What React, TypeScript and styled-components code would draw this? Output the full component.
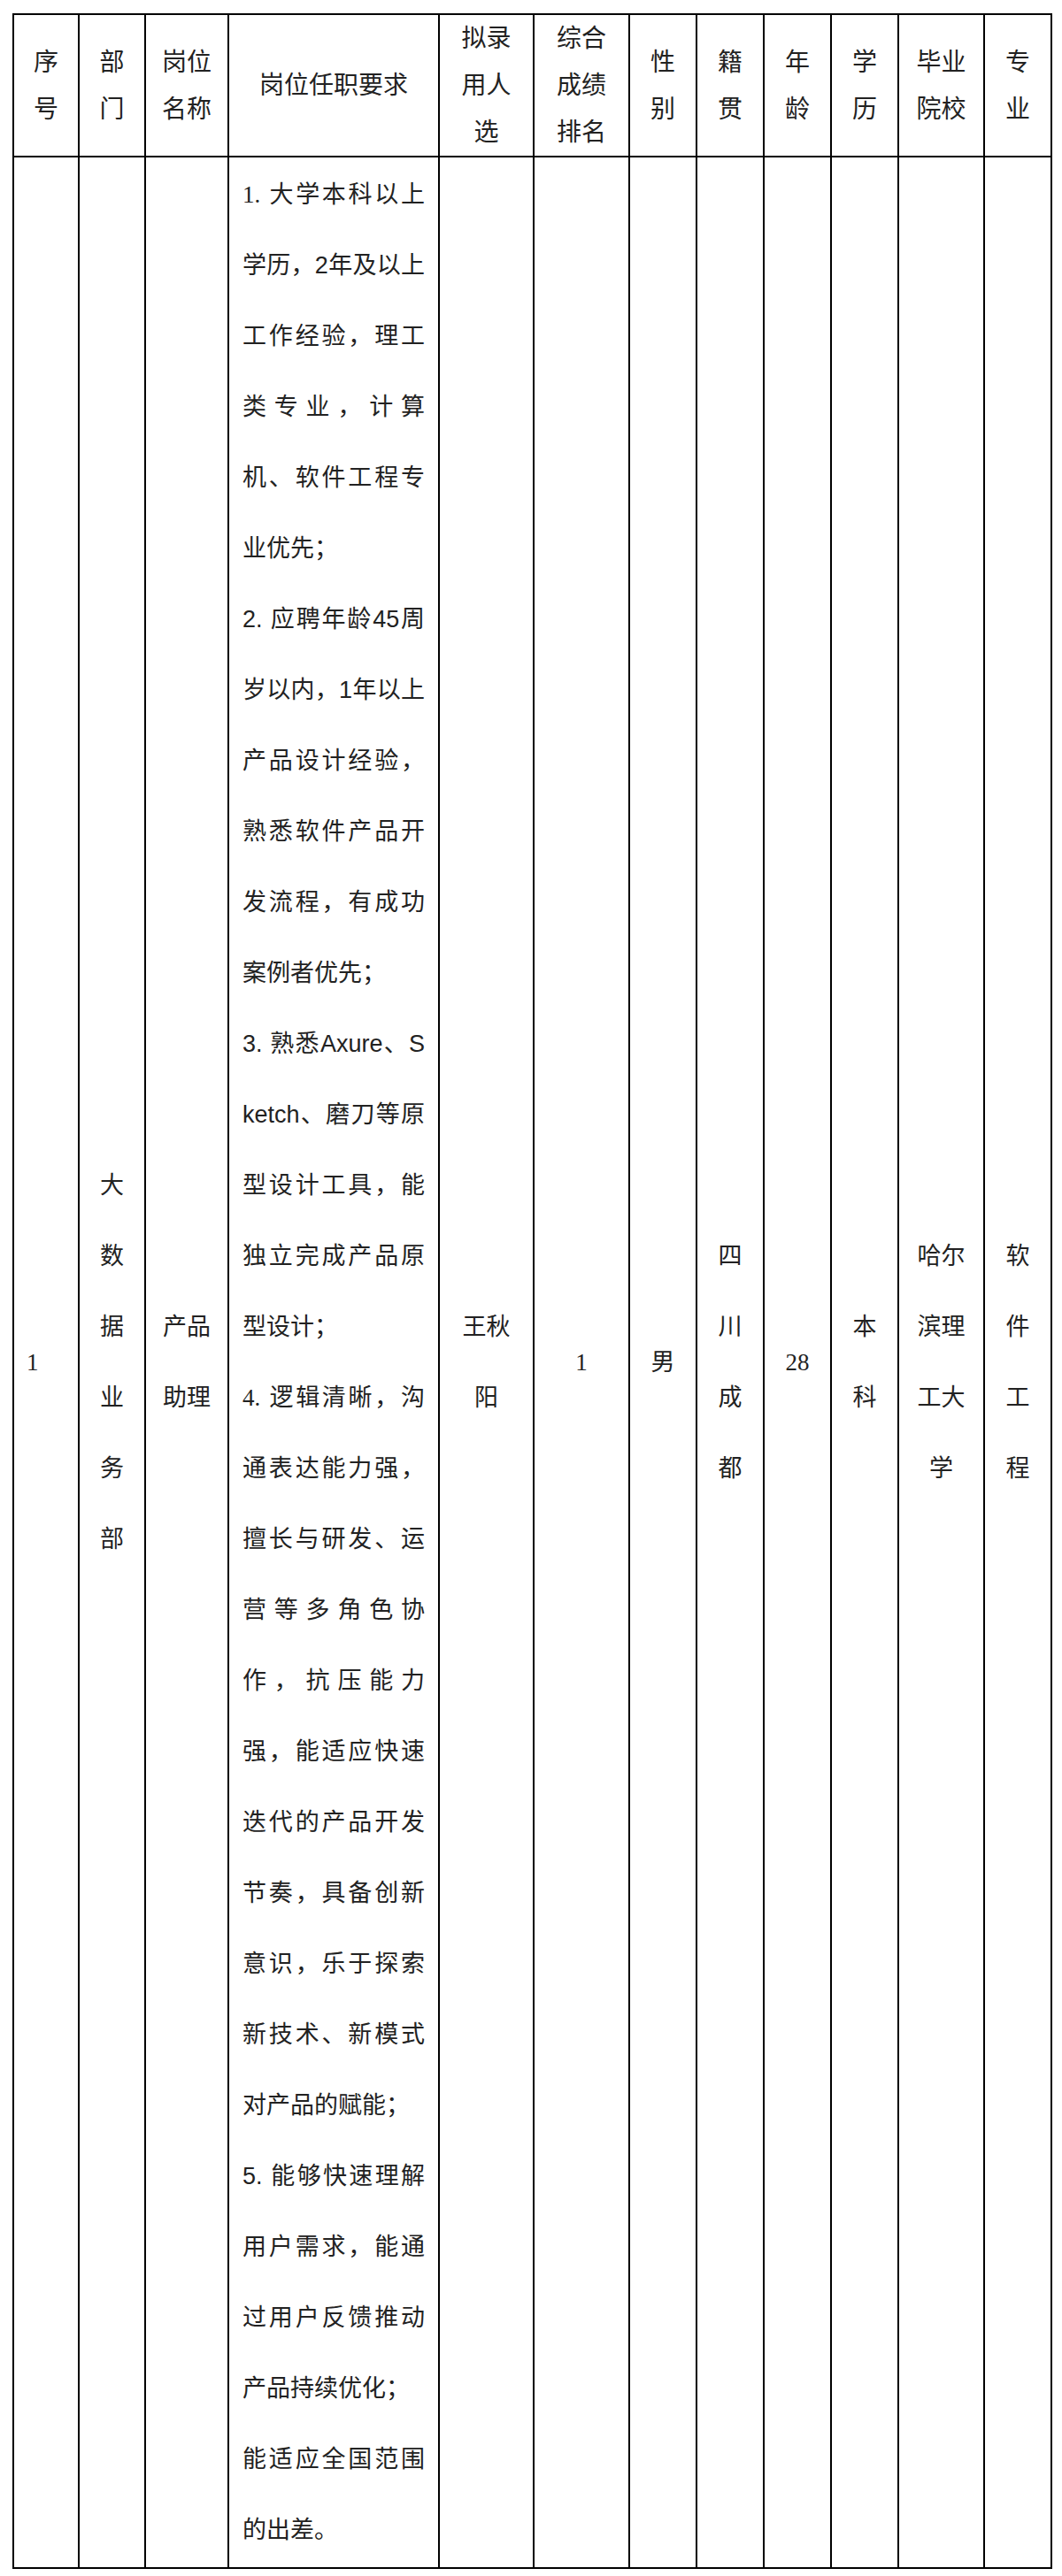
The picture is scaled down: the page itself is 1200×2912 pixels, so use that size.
import React from "react";
import styled, { createGlobalStyle } from "styled-components";

const GlobalStyle = createGlobalStyle`
  html, body {
    margin: 0;
    padding: 0;
    background: #ffffff;
  }
  body {
    font-family: "Liberation Serif", "Noto Sans CJK SC", serif;
    color: #222222;
  }
`;

const Page = styled.div`
  padding: 15px 0 0 14px;
`;

const Table = styled.table`
  border-collapse: collapse;
  table-layout: fixed;
  width: 1175px;
  color: #222222;
`;

const HeadCell = styled.th`
  border: 2px solid #000000;
  padding: 0;
  font-family: "Liberation Serif", "Noto Sans CJK SC", serif;
  font-size: 28px;
  line-height: 53px;
  font-weight: 400;
  text-align: center;
  vertical-align: middle;
`;

const Cell = styled.td<{ $left?: boolean }>`
  border: 2px solid #000000;
  padding: ${(p) => (p.$left ? "2px 0 2px 14px" : "2px 0")};
  font-family: "Liberation Serif", "Noto Sans CJK SC", serif;
  font-size: 27px;
  line-height: 80px;
  text-align: ${(p) => (p.$left ? "left" : "center")};
  vertical-align: middle;
`;

const ReqCell = styled.td`
  border: 2px solid #000000;
  padding: 2px 15px;
  font-family: "Liberation Sans", "Noto Sans CJK SC", sans-serif;
  font-size: 27px;
  line-height: 80px;
  vertical-align: top;
`;

const ReqLine = styled.span<{ $last?: boolean }>`
  display: block;
  text-align: ${(p) => (p.$last ? "left" : "justify")};
  text-align-last: ${(p) => (p.$last ? "left" : "justify")};
`;

const SerifNum = styled.span`
  font-family: "Liberation Serif", "Noto Sans CJK SC", serif;
`;

const colWidths = [74, 75, 94, 238, 107, 108, 76, 76, 76, 76, 97, 76];

const headers: string[][] = [
  ["序", "号"],
  ["部", "门"],
  ["岗位", "名称"],
  ["岗位任职要求"],
  ["拟录", "用人", "选"],
  ["综合", "成绩", "排名"],
  ["性", "别"],
  ["籍", "贯"],
  ["年", "龄"],
  ["学", "历"],
  ["毕业", "院校"],
  ["专", "业"],
];

type Para = { lead?: string; lines: string[] };

const paragraphs: Para[] = [
  {
    lead: "1.",
    lines: [" 大学本科以上", "学历，2年及以上", "工作经验，理工", "类专业，计算", "机、软件工程专", "业优先；"],
  },
  {
    lines: ["2. 应聘年龄45周", "岁以内，1年以上", "产品设计经验，", "熟悉软件产品开", "发流程，有成功", "案例者优先；"],
  },
  {
    lines: ["3. 熟悉Axure、S", "ketch、磨刀等原", "型设计工具，能", "独立完成产品原", "型设计；"],
  },
  {
    lead: "4.",
    lines: [
      " 逻辑清晰，沟",
      "通表达能力强，",
      "擅长与研发、运",
      "营等多角色协",
      "作，抗压能力",
      "强，能适应快速",
      "迭代的产品开发",
      "节奏，具备创新",
      "意识，乐于探索",
      "新技术、新模式",
      "对产品的赋能；",
    ],
  },
  {
    lines: ["5. 能够快速理解", "用户需求，能通", "过用户反馈推动", "产品持续优化；"],
  },
  {
    lines: ["能适应全国范围", "的出差。"],
  },
];

const bodyCells: { lines: string[]; left?: boolean }[] = [
  { lines: ["1"], left: true },
  { lines: ["大", "数", "据", "业", "务", "部"] },
  { lines: ["产品", "助理"] },
];

const afterReq: string[][] = [
  ["王秋", "阳"],
  ["1"],
  ["男"],
  ["四", "川", "成", "都"],
  ["28"],
  ["本", "科"],
  ["哈尔", "滨理", "工大", "学"],
  ["软", "件", "工", "程"],
];

const Lines: React.FC<{ lines: string[] }> = ({ lines }) => (
  <>
    {lines.map((l, i) => (
      <React.Fragment key={i}>
        {i > 0 && <br />}
        {l}
      </React.Fragment>
    ))}
  </>
);

export default function App() {
  return (
    <>
      <GlobalStyle />
      <Page>
        <Table>
          <colgroup>
            {colWidths.map((w, i) => (
              <col key={i} style={{ width: w }} />
            ))}
          </colgroup>
          <thead>
            <tr>
              {headers.map((h, i) => (
                <HeadCell key={i}>
                  <Lines lines={h} />
                </HeadCell>
              ))}
            </tr>
          </thead>
          <tbody>
            <tr>
              {bodyCells.map((c, i) => (
                <Cell key={i} $left={c.left}>
                  <Lines lines={c.lines} />
                </Cell>
              ))}
              <ReqCell>
                {paragraphs.map((p, pi) =>
                  p.lines.map((line, li) => (
                    <ReqLine key={`${pi}-${li}`} $last={li === p.lines.length - 1}>
                      {li === 0 && p.lead ? <SerifNum>{p.lead}</SerifNum> : null}
                      {line}
                    </ReqLine>
                  ))
                )}
              </ReqCell>
              {afterReq.map((c, i) => (
                <Cell key={i}>
                  <Lines lines={c} />
                </Cell>
              ))}
            </tr>
          </tbody>
        </Table>
      </Page>
    </>
  );
}
